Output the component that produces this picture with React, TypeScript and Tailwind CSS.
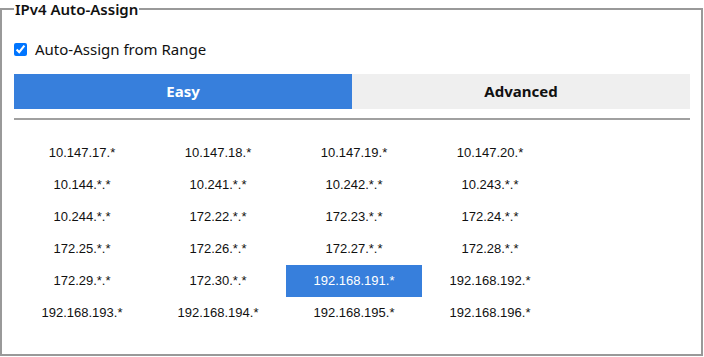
import { useState } from "react";

const ranges = [
  "10.147.17.*", "10.147.18.*", "10.147.19.*", "10.147.20.*",
  "10.144.*.*", "10.241.*.*", "10.242.*.*", "10.243.*.*",
  "10.244.*.*", "172.22.*.*", "172.23.*.*", "172.24.*.*",
  "172.25.*.*", "172.26.*.*", "172.27.*.*", "172.28.*.*",
  "172.29.*.*", "172.30.*.*", "192.168.191.*", "192.168.192.*",
  "192.168.193.*", "192.168.194.*", "192.168.195.*", "192.168.196.*",
];

const App = () => {
  const [tab, setTab] = useState("easy");
  const [selected, setSelected] = useState("192.168.191.*");
  const [auto, setAuto] = useState(true);

  return (
    <div className="w-[704px] h-[357px] bg-white font-['Segoe_UI','Noto_Sans',sans-serif] text-[#111]">
      <fieldset className="w-[703px] h-[356px] border-2 border-[#999] pl-[12px] pr-[11px] m-0">
        <legend className="px-[1px] text-[15px] font-semibold leading-[18px] -mb-[1px]">IPv4 Auto-Assign</legend>

        <label className="flex items-center gap-[8px] mt-[22px] h-[20px] text-[15px]">
          <input
            type="checkbox"
            checked={auto}
            onChange={(e) => setAuto(e.target.checked)}
            className="w-[13px] h-[13px] m-0 accent-[#0075ff]"
          />
          Auto-Assign from Range
        </label>

        <div className="flex mt-[15px] h-[35px] text-[15px] font-bold">
          <button
            onClick={() => setTab("easy")}
            className={tab === "easy" ? "flex-1 bg-[#377fdc] text-white" : "flex-1 bg-[#efefef] text-[#111]"}
          >
            Easy
          </button>
          <button
            onClick={() => setTab("advanced")}
            className={tab === "advanced" ? "flex-1 bg-[#377fdc] text-white" : "flex-1 bg-[#efefef] text-[#111]"}
          >
            Advanced
          </button>
        </div>
        <div className="h-[2px] mt-[9px] bg-[#a0a0a0]" />

        <div className="grid grid-cols-[repeat(4,136px)] mt-[17px] font-['Liberation_Sans',Arial,sans-serif] text-[13px]">
          {ranges.map((r) => (
            <button
              key={r}
              onClick={() => setSelected(r)}
              className={
                r === selected
                  ? "h-[32px] bg-[#377fdc] text-white"
                  : "h-[32px] text-[#111]"
              }
            >
              {r}
            </button>
          ))}
        </div>
      </fieldset>
    </div>
  );
};

export default App;
